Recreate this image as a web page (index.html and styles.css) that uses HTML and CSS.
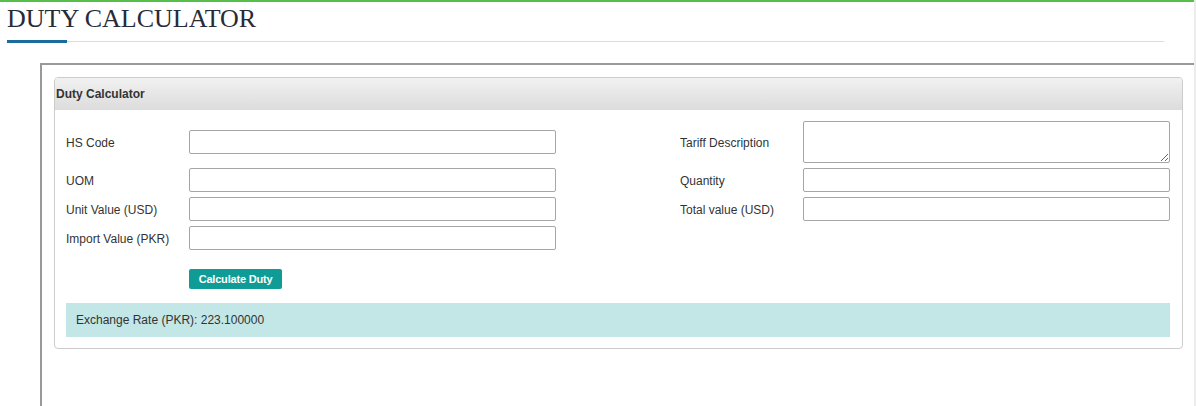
FILE: index.html
```html
<!DOCTYPE html>
<html lang="en">
<head>
  <meta charset="UTF-8">
  <meta name="viewport" content="width=device-width, initial-scale=1.0">
  <title>Duty Calculator</title>
  <link rel="stylesheet" href="styles.css">
</head>
<body>
<div class="page">
  <div class="top-bar"></div>
  <h1 class="page-title">DUTY CALCULATOR</h1>
  <div class="title-rule"><span class="accent"></span><span class="rest"></span></div>

  <div class="content-box">
    <div class="panel">
      <div class="panel-heading">Duty Calculator</div>
      <div class="panel-body">
        <div class="form-grid">
          <label class="lbl">HS Code</label>
          <input type="text" class="field">
          <span></span>
          <label class="lbl">Tariff Description</label>
          <textarea class="field area"></textarea>

          <label class="lbl">UOM</label>
          <input type="text" class="field">
          <span></span>
          <label class="lbl">Quantity</label>
          <input type="text" class="field">

          <label class="lbl">Unit Value (USD)</label>
          <input type="text" class="field">
          <span></span>
          <label class="lbl">Total value (USD)</label>
          <input type="text" class="field">

          <label class="lbl">Import Value (PKR)</label>
          <input type="text" class="field">
        </div>
        <div class="actions">
          <button class="btn-calc">Calculate Duty</button>
        </div>
        <div class="rate-bar">Exchange Rate (PKR): 223.100000</div>
      </div>
    </div>
  </div>
</div>
</body>
</html>
```

FILE: styles.css
```css
html, body { margin: 0; padding: 0; background: #fff; overflow: hidden; }
body { font-family: "Liberation Sans", Arial, sans-serif; font-size: 12px; color: #333; }

.page { width: 1194px; height: 406px; border-right: 2px solid #ececec; overflow: hidden; }
.top-bar { height: 2px; background: #55bf4a; }

.page-title {
  margin: 0;
  padding: 2px 0 0 7px;
  font-family: "Liberation Serif", "Times New Roman", serif;
  font-weight: normal;
  font-size: 26px;
  line-height: 30px;
  color: #272b36;
}

.title-rule { display: flex; align-items: flex-end; margin: 6px 0 0 7px; width: 1157px; height: 3px; }
.title-rule .accent { width: 60px; height: 3px; background: #1b6b9c; }
.title-rule .rest { flex: 1; height: 1px; margin-bottom: 1px; background: #dcdcdc; }

.content-box {
  box-sizing: border-box;
  margin: 20px 0 0 40px;
  border-top: 2px solid #999;
  border-left: 2px solid #999;
  padding: 12px 11px 0 12px;
  height: 343px;
}

.panel { border: 1px solid #ccc; border-radius: 4px; background: #fff; }
.panel-heading {
  height: 32px;
  line-height: 32px;
  padding-left: 1px;
  font-weight: bold;
  font-size: 12px;
  color: #333;
  background: linear-gradient(#f1f1f1, #dcdcdc);
  border-radius: 3px 3px 0 0;
}
.panel-body { padding: 11px 12px 11px 11px; }

.form-grid {
  display: grid;
  grid-template-columns: 123px 367px 124px 123px 367px;
  row-gap: 5px;
  align-items: center;
}
.lbl { font-size: 12px; color: #333; padding-top: 2px; }
.field {
  box-sizing: border-box;
  width: 367px;
  height: 24px;
  margin: 0;
  border: 1px solid #a6a6a6;
  border-radius: 2px;
  background: #fff;
  font-family: inherit;
  font-size: 12px;
}
.field.area { height: 42px; resize: vertical; display: block; }

.actions { margin: 19px 0 0 123px; }
.btn-calc {
  display: block;
  width: 93px;
  height: 20px;
  padding: 0;
  border: none;
  border-radius: 2px;
  background: #0f9c96;
  color: #fff;
  font-family: inherit;
  font-weight: bold;
  font-size: 11px;
  letter-spacing: -0.2px;
  cursor: pointer;
}

.rate-bar {
  margin-top: 14px;
  height: 34px;
  line-height: 34px;
  padding-left: 10px;
  background: #c3e6e6;
  font-size: 12px;
  color: #333;
}
```
